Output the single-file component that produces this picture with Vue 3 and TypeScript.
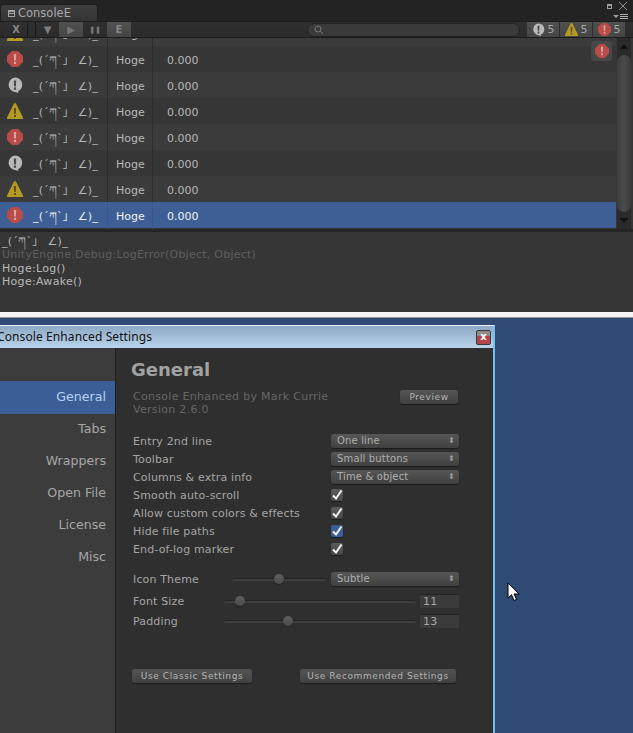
<script setup lang="ts">
type Level = 'warn' | 'err' | 'info'

interface Row {
  level: Level
  selected?: boolean
}

interface Setting {
  label: string
  value?: string
  checked?: boolean
  accent?: boolean
}

const face = '_(´ཀ`」 ∠)_'

const rows: Row[] = [
  { level: 'warn' },
  { level: 'err' },
  { level: 'info' },
  { level: 'warn' },
  { level: 'err' },
  { level: 'info' },
  { level: 'warn' },
  { level: 'err', selected: true },
]

const counters: Level[] = ['info', 'warn', 'err']

const tools = [
  { label: 'X', cls: 'first' },
  { label: '▼', cls: 'second' },
  { label: '▶', cls: 'on dim' },
  { label: '❚❚', cls: 'small' },
  { label: 'E', cls: 'on' },
]

const navItems = ['General', 'Tabs', 'Wrappers', 'Open File', 'License', 'Misc']

const settings: Setting[] = [
  { label: 'Entry 2nd line', value: 'One line' },
  { label: 'Toolbar', value: 'Small buttons' },
  { label: 'Columns & extra info', value: 'Time & object' },
  { label: 'Smooth auto-scroll', checked: true },
  { label: 'Allow custom colors & effects', checked: true },
  { label: 'Hide file paths', checked: true, accent: true },
  { label: 'End-of-log marker', checked: true },
]

const sliders = [
  { label: 'Font Size', value: 11, pos: 11 },
  { label: 'Padding', value: 13, pos: 59 },
]
</script>

<template>
  <div class="screen">
    <svg class="defs" width="0" height="0">
      <symbol id="err" viewBox="0 0 16 16">
        <path d="M5 0h6l5 5v6l-5 5H5l-5-5V5z" fill="#b94c49" />
        <path d="M6.800 3h2.400l-.3 6.500H7.100zM6.900 10.700h2.200v2.200H6.900z" fill="#dca59d" />
      </symbol>
      <symbol id="warn" viewBox="0 0 16 16">
        <path d="M8 0l1 .4L16 14.600V16H0v-1.400L7 .4z" fill="#b39a25" />
        <path d="M6.900 5h2.200l-.3 6H7.200zM7 12h2v2H7z" fill="#5c4d14" />
      </symbol>
      <symbol id="info" viewBox="0 0 16 16">
        <path d="M8 .5a7.200 7.200 0 0 1 7.200 7.200c0 3-1.700 5.300-4.200 6.500L11.500 16 8 15A7.300 7.300 0 0 1 8 .5z" fill="#b8b8b8" />
        <path d="M6.800 3.500h2.400l-.3 6H7.100zM6.900 10.600h2.200v2.200H6.900z" fill="#484848" />
      </symbol>
    </svg>

    <section class="console">
      <div class="tabbar">
        <div class="tab"><span class="tab-mark"></span>ConsoleE</div>
        <div class="win-controls">
          <div class="win-buttons">
            <span class="restore"></span>
            <svg width="10" height="10" viewBox="0 0 10 10"><path d="M1 1l8 8M9 1L1 9" stroke="#8f8f8f" stroke-width="1" fill="none" /></svg>
          </div>
          <div class="menu-mark">
            <span class="menu-arrow"></span>
            <span class="menu-lines"></span>
          </div>
        </div>
      </div>

      <div class="toolbar">
        <button v-for="tool in tools" :key="tool.label" class="tool" :class="tool.cls">{{ tool.label }}</button>
        <div class="search">
          <svg width="10" height="10" viewBox="0 0 10 10"><circle cx="4" cy="4" r="3" stroke="#777" fill="none" /><path d="M6 6l3 3" stroke="#777" /></svg>
        </div>
        <div class="counters">
          <div v-for="level in counters" :key="level" class="counter">
            <svg width="13" height="13"><use :href="'#' + level" /></svg>
            <span>5</span>
          </div>
        </div>
      </div>

      <div class="list-area">
        <div class="list">
          <div v-for="(row, i) in rows" :key="i" class="row" :class="{ selected: row.selected }">
            <div class="cell main">
              <svg class="row-icon" width="16" height="16"><use :href="'#' + row.level" /></svg>
              <span>{{ face }}</span>
            </div>
            <div class="cell name">Hoge</div>
            <div class="cell time">0.000</div>
          </div>
        </div>
        <div class="scrollbar">
          <span class="arrow up"></span>
          <span class="thumb"></span>
          <span class="arrow down"></span>
        </div>
        <div class="float-btn">
          <svg width="14" height="14"><use href="#err" /></svg>
        </div>
      </div>

      <div class="detail">
        <div>{{ face }}</div>
        <div class="muted">UnityEngine.Debug:LogError(Object, Object)</div>
        <div>Hoge:Log()</div>
        <div>Hoge:Awake()</div>
      </div>
    </section>

    <div class="strip"></div>

    <section class="desktop">
      <div class="window">
        <div class="titlebar">
          <span class="title">Console Enhanced Settings</span>
          <span class="close">x</span>
        </div>
        <div class="window-body">
          <nav class="nav">
            <div v-for="(item, i) in navItems" :key="item" class="nav-item" :class="{ active: i === 0 }">{{ item }}</div>
          </nav>
          <main class="panel">
            <h1>General</h1>
            <div class="about">
              <div class="about-text">
                <div>Console Enhanced by Mark Currie</div>
                <div>Version 2.6.0</div>
              </div>
              <button class="btn preview">Preview</button>
            </div>

            <div class="settings">
              <div v-for="s in settings" :key="s.label" class="setting">
                <span>{{ s.label }}</span>
                <div v-if="s.value" class="select">{{ s.value }}</div>
                <div v-else class="check" :class="{ accent: s.accent }">
                  <svg width="12" height="12" viewBox="0 0 12 12"><path d="M2 6.500l3 3 5.500-8" stroke="#f2f2f2" stroke-width="2" fill="none" /></svg>
                </div>
              </div>
            </div>

            <div class="theme-row">
              <span class="theme-label">Icon Theme</span>
              <div class="track theme-track"><span class="knob" style="left: 42px"></span></div>
              <div class="select">Subtle</div>
            </div>
            <div class="sliders">
              <div v-for="s in sliders" :key="s.label" class="slider-row">
                <span class="slider-label">{{ s.label }}</span>
                <div class="track"><span class="knob" :style="{ left: s.pos + 'px' }"></span></div>
                <div class="num">{{ s.value }}</div>
              </div>
            </div>

            <div class="actions">
              <button class="btn classic">Use Classic Settings</button>
              <button class="btn recommended">Use Recommended Settings</button>
            </div>
          </main>
        </div>
      </div>
      <svg class="cursor" width="13" height="20" viewBox="0 0 13 20">
        <path d="M1 1v15l3.500-3.300L7 18.500l2.500-1-2.500-5.500h5z" fill="#fff" stroke="#000" stroke-width="1" />
      </svg>
    </section>
  </div>
</template>

<style>
html,
body {
  margin: 0;
  background: #2e4a75;
}
</style>

<style scoped>
.screen {
  width: 633px;
  height: 733px;
  overflow: hidden;
  display: flex;
  flex-direction: column;
  font-family: "DejaVu Sans", "Noto Sans CJK JP", sans-serif;
  font-size: 11px;
  color: #b8b8b8;
}

.defs {
  position: absolute;
}

button {
  font-family: inherit;
  padding: 0;
  border: 0;
}

.console {
  background: #363636;
  flex: none;
}

.tabbar {
  height: 21px;
  background: #232323;
  display: flex;
  align-items: flex-end;
  justify-content: space-between;
  box-sizing: border-box;
  padding-right: 5px;
}

.tab {
  width: 98px;
  height: 17px;
  box-sizing: border-box;
  padding-left: 7px;
  background: linear-gradient(#3f3f3f, #343434);
  border-radius: 4px 4px 0 0;
  border: 1px solid #1e1e1e;
  border-bottom: 0;
  font-size: 11.500px;
  line-height: 16px;
  color: #a8a8a8;
  display: flex;
  align-items: center;
  gap: 3px;
}

.tab-mark {
  width: 5px;
  height: 5px;
  border: 1px solid #a4a4a4;
  background: linear-gradient(#a4a4a4 1px, transparent 1px, transparent 2px, #a4a4a4 2px, #a4a4a4 3px, transparent 3px);
}

.win-controls {
  display: flex;
  flex-direction: column;
  align-items: flex-end;
  gap: 3px;
  height: 20px;
}

.win-buttons {
  display: flex;
  align-items: center;
  gap: 6px;
}

.restore {
  width: 3px;
  height: 2px;
  border: 1px solid #a0a0a0;
  border-top-width: 2px;
}

.menu-mark {
  display: flex;
  align-items: center;
  gap: 1px;
}

.menu-arrow {
  border: 3px solid transparent;
  border-top-color: #a0a0a0;
  border-bottom: 0;
}

.menu-lines {
  width: 8px;
  height: 5px;
  background: repeating-linear-gradient(#b0b0b0 0 1px, #232323 1px 2px);
}

.toolbar {
  height: 17px;
  box-sizing: border-box;
  padding-left: 5px;
  background: linear-gradient(#2f2f2f, #2b2b2b);
  border-top: 1px solid #1d1d1d;
  border-bottom: 1px solid #1c1c1c;
  display: flex;
  align-items: stretch;
}

.tool {
  width: 24px;
  background: transparent;
  color: #858585;
  font-size: 10px;
  font-weight: bold;
}

.tool.first {
  width: 23px;
  margin-right: 7px;
  border-right: 1px solid #191919;
}

.tool.second {
  border-left: 1px solid #191919;
  color: #7c7c7c;
}

.tool.on {
  background: linear-gradient(#515151, #454545);
}

.tool.dim {
  color: #777;
}

.tool.small {
  font-size: 7px;
  color: #777;
}

.search {
  width: 213px;
  height: 14px;
  align-self: center;
  margin-left: 176px;
  box-sizing: border-box;
  padding: 1px 6px;
  border-radius: 7px;
  background: #3a3a3a;
  border: 1px solid #222;
  display: flex;
  align-items: center;
}

.counters {
  display: flex;
  margin-left: 7px;
}

.counter {
  width: 33px;
  box-sizing: border-box;
  border-right: 1px solid #2b2b2b;
  background: linear-gradient(#4f4f4f, #454545);
  display: flex;
  align-items: center;
  justify-content: center;
  gap: 3px;
  color: #a5a5a5;
}

.list-area {
  position: relative;
  height: 191px;
  display: flex;
  overflow: hidden;
  padding-right: 2px;
}

.list {
  flex: 1;
  overflow: hidden;
}

.row {
  height: 26px;
  display: grid;
  grid-template-columns: 108px 45px 1fr;
  line-height: 29px;
}

.row:first-child {
  margin-top: -18px;
}

.row:nth-child(odd) {
  background: #3b3b3b;
}

.row:nth-child(even) {
  background: #363636;
}

.row.selected {
  background: #3d5f95;
  color: #f0f0f0;
}

.cell {
  box-sizing: border-box;
  border-right: 1px solid #2c2c2c;
}

.row.selected .cell {
  border-right-color: #38578a;
}

.main {
  display: flex;
  align-items: flex-start;
  padding-left: 7px;
  gap: 10px;
  white-space: pre;
  letter-spacing: 0.2px;
}

.row-icon {
  flex: none;
  margin-top: 5px;
}

.name {
  padding-left: 8px;
}

.time {
  border: 0;
  padding-left: 14px;
}

.scrollbar {
  width: 14px;
  flex: none;
  margin-left: 1px;
  background: #2a2a2a;
  display: flex;
  flex-direction: column;
  align-items: center;
}

.arrow {
  flex: none;
  box-sizing: border-box;
  border-left: 4px solid transparent;
  border-right: 4px solid transparent;
}

.arrow.up {
  border-bottom: 5px solid #111;
  border-top: 6px solid transparent;
  height: 11px;
  margin-bottom: 6px;
}

.arrow.down {
  border-top: 5px solid #111;
  border-bottom: 6px solid transparent;
  height: 11px;
  margin-top: 6px;
}

.thumb {
  flex: 1;
  width: 100%;
  border-radius: 7px;
  background: linear-gradient(90deg, #3f3f3f, #4a4a4a 50%, #3c3c3c);
}

.float-btn {
  position: absolute;
  left: 591px;
  top: 3px;
  width: 21px;
  height: 20px;
  border-radius: 3px;
  background: #474747;
  display: flex;
  align-items: center;
  justify-content: center;
}

.detail {
  height: 83px;
  box-sizing: border-box;
  border-top: 3px solid #242424;
  padding: 3px 2px 0;
  line-height: 13.300px;
  color: #b8b8b8;
  white-space: pre;
  letter-spacing: 0.3px;
}

.muted {
  color: #5f5f5f;
  letter-spacing: 0.25px;
}

.strip {
  height: 5px;
  flex: none;
  background: #f4f4f4;
  border-bottom: 1px solid #9a9a9a;
}

.desktop {
  position: relative;
  flex: 1;
  min-height: 0;
  padding-top: 7px;
  background: #2e4a75;
}

.window {
  width: 503px;
  margin-left: -8px;
  box-sizing: border-box;
  border-top: 1px solid #f2f2f2;
  border-right: 2px solid #6ec3ea;
  height: 420px;
  display: flex;
  flex-direction: column;
  background: #2f2f2f;
}

.titlebar {
  height: 22px;
  flex: none;
  background: linear-gradient(#8ea9c5, #b9d3ec);
  display: flex;
  align-items: center;
  justify-content: space-between;
  padding: 0 2px 0 5px;
  color: #111;
  font-family: "Noto Sans", sans-serif;
  font-size: 12px;
}

.title {
  letter-spacing: 0.1px;
  margin-top: -1px;
}

.close {
  width: 13px;
  height: 13px;
  border: 1px solid #3a3a3a;
  border-radius: 2px;
  background: linear-gradient(#8e8e8e 40%, #b2444a 40%);
  color: #fff;
  font-family: "DejaVu Sans", sans-serif;
  font-weight: bold;
  font-size: 10px;
  line-height: 11px;
  text-align: center;
}

.window-body {
  flex: 1;
  display: flex;
  min-height: 0;
}

.nav {
  width: 124px;
  flex: none;
  box-sizing: border-box;
  padding-top: 33px;
  background: #3c3c3c;
  border-right: 1px solid #1e1e1e;
}

.nav-item {
  height: 32px;
  line-height: 32px;
  padding-right: 9px;
  text-align: right;
  font-size: 12.600px;
  color: #a6a6a6;
}

.nav-item.active {
  height: 33px;
  margin-bottom: -1px;
  background: #3c5e96;
  color: #b6d2f4;
}

.panel {
  flex: 1;
  padding: 11px 0 0 17px;
  color: #a5a5a5;
  letter-spacing: 0.15px;
}

h1 {
  margin: 0 0 0 -2px;
  font-size: 18px;
  line-height: 22px;
  color: #a2a2a2;
  letter-spacing: 0;
}

.about {
  display: flex;
  justify-content: space-between;
  margin-top: 9px;
  width: 326px;
  line-height: 13px;
  color: #666;
  letter-spacing: 0.3px;
}

.btn {
  background: linear-gradient(#555, #404040);
  color: #b4b4b4;
  border-radius: 3px;
  box-shadow: 0 1px 1px #1b1b1b;
  font-size: 9px;
  letter-spacing: 0.6px;
}

.preview {
  width: 58px;
  height: 14px;
  margin-right: 1px;
}

.settings {
  margin-top: 16px;
}

.setting {
  height: 18px;
  display: grid;
  grid-template-columns: 198px 128px;
  align-items: center;
}

.select {
  height: 14px;
  box-sizing: border-box;
  padding-left: 6px;
  background: linear-gradient(#565656, #404040);
  border-radius: 3px;
  box-shadow: 0 1px 1px #1b1b1b;
  color: #aeaeae;
  font-size: 10px;
  line-height: 13px;
  position: relative;
}

.select::after {
  content: "⬍";
  position: absolute;
  right: 4px;
  top: 0;
  font-size: 8px;
  color: #9a9a9a;
}

.check {
  width: 12px;
  height: 12px;
  border-radius: 2px;
  background: linear-gradient(#5c5c5c, #474747);
  box-shadow: 0 1px 1px #1b1b1b;
}

.check.accent {
  background: #3c5e96;
}

.check svg {
  display: block;
}

.theme-row {
  margin-top: 12px;
  height: 18px;
  display: grid;
  grid-template-columns: 99px 94px 133px;
  align-items: center;
  width: 326px;
}

.theme-row .select {
  margin-left: 5px;
}

.track {
  position: relative;
  height: 3px;
  border-radius: 2px;
  background: #3e3e3e;
  box-shadow: inset 0 1px 0 #222;
}

.knob {
  position: absolute;
  top: -4px;
  width: 10px;
  height: 10px;
  border-radius: 50%;
  background: linear-gradient(#5e5e5e, #4a4a4a);
  box-shadow: 0 1px 1px #222;
}

.sliders {
  margin-top: 3px;
}

.slider-row {
  height: 20px;
  display: grid;
  grid-template-columns: 91px 192px 43px;
  width: 326px;
  align-items: center;
}

.num {
  margin-left: 4px;
  height: 14px;
  box-sizing: border-box;
  padding-left: 3px;
  background: #3b3b3b;
  border-top: 1px solid #222;
  color: #a8a8a8;
  line-height: 14px;
}

.actions {
  display: flex;
  margin-top: 38px;
  margin-left: -1px;
}

.classic {
  width: 120px;
  height: 14px;
}

.recommended {
  width: 156px;
  height: 14px;
  margin-left: 48px;
}

.cursor {
  position: absolute;
  left: 507px;
  top: 264px;
}
</style>
